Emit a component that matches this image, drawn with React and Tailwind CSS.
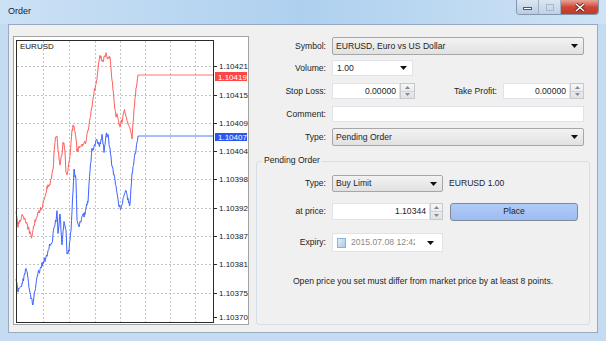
import React from 'react';

// price traces, page coordinates (key points, filled in with a little noise)
const RED_KEYS = [
  [16, 212], [18, 225], [20, 220], [23, 215], [26, 222], [29, 230], [32, 237], [34, 225],
  [37, 215], [40, 210], [43, 205], [45, 195], [48, 185], [50, 183], [53, 170], [55, 140],
  [57, 137], [58, 150], [60, 165], [62, 153], [63, 140], [65, 150], [66, 175], [68, 170],
  [70, 155], [72, 130], [74, 125], [76, 140], [77, 150], [80, 148], [83, 143], [86, 141],
  [88, 130], [90, 120], [92, 105], [94, 92], [96, 85], [98, 70], [100, 55], [102, 62],
  [104, 58], [106, 52], [108, 60], [110, 55], [112, 80], [114, 100], [116, 115], [118, 117],
  [120, 128], [122, 120], [124, 110], [126, 115], [128, 125], [130, 130], [132, 137],
  [134, 110], [136, 90], [138, 75], [213, 75],
];

const BLUE_KEYS = [
  [16, 277], [18, 290], [22, 285], [26, 268], [28, 278], [30, 295], [33, 305], [35, 290],
  [37, 275], [40, 270], [43, 262], [46, 258], [48, 250], [50, 245], [52, 243], [54, 228],
  [56, 220], [57, 210], [58, 235], [60, 212], [62, 245], [64, 220], [66, 230], [67, 255],
  [69, 250], [71, 230], [73, 190], [74, 170], [76, 180], [77, 222], [79, 225], [82, 218],
  [85, 213], [88, 200], [90, 170], [92, 150], [95, 145], [97, 140], [100, 145], [102, 135],
  [104, 150], [106, 135], [108, 135], [110, 150], [112, 165], [115, 180], [117, 195],
  [119, 205], [121, 208], [124, 195], [126, 190], [128, 200], [130, 205], [132, 175],
  [134, 160], [136, 150], [138, 136], [213, 136],
];

const GRID_X = [29, 55, 81, 106, 131, 156, 181];
const GRID_Y = [29, 58, 86, 114, 142, 171, 199, 227, 256];
const PRICES = [
  ['1.10421', 29], ['1.10415', 58], ['1.10409', 86], ['1.10404', 114], ['1.10398', 142],
  ['1.10392', 171], ['1.10387', 199], ['1.10381', 227], ['1.10375', 256], ['1.10370', 280],
];

function jitter(x, seed) {
  const v = Math.sin(x * 12.9898 + seed * 78.233) * 43758.5453;
  return v - Math.floor(v) - 0.5;
}

function trace(keys, seed) {
  const pts = [];
  for (let i = 0; i < keys.length - 1; i++) {
    const [x0, y0] = keys[i];
    const [x1, y1] = keys[i + 1];
    const n = Math.max(1, Math.round((x1 - x0) * 2));
    for (let s = 0; s < n; s++) {
      const x = x0 + ((x1 - x0) * s) / n;
      let y = y0 + ((y1 - y0) * s) / n;
      if (x1 - x0 < 20) y += jitter(x, seed) * 5;
      pts.push([x, y]);
    }
  }
  pts.push(keys[keys.length - 1]);
  return pts.map(([x, y]) => `${(x - 14).toFixed(1)},${(y - 37).toFixed(1)}`).join(' ');
}

const Chart = () => (
  <svg width="234" height="287" className="block" fontFamily="Liberation Sans, Arial, sans-serif">
    <rect width="234" height="287" fill="#fff" />
    {GRID_X.map((x) => (
      <line key={x} x1={x + 0.5} y1="4" x2={x + 0.5} y2="285" stroke="#c4c4c4" strokeDasharray="2 2" />
    ))}
    {GRID_Y.map((y) => (
      <line key={y} x1="3" y1={y + 0.5} x2="199" y2={y + 0.5} stroke="#c4c4c4" strokeDasharray="2 2" />
    ))}
    <polyline points={trace(RED_KEYS, 1)} fill="none" stroke="#ff5c5c" strokeWidth="1" />
    <polyline points={trace(BLUE_KEYS, 2)} fill="none" stroke="#3b62ff" strokeWidth="1" />
    <rect x="2.5" y="3.5" width="197" height="282" fill="none" stroke="#2b2b2b" />
    {PRICES.map(([p, y]) => (
      <g key={p}>
        <line x1="199" y1={y + 0.5} x2="203" y2={y + 0.5} stroke="#2b2b2b" />
        <text x="205" y={y + 3} fontSize="8" fill="#222">{p}</text>
      </g>
    ))}
    <rect x="201" y="35" width="32" height="9" fill="#ff4646" />
    <text x="204" y="42.5" fontSize="8" fill="#fff">1.10419</text>
    <rect x="201" y="96" width="32" height="8" fill="#2c56f2" />
    <text x="204" y="103" fontSize="8" fill="#fff">1.10407</text>
    <text x="6" y="12" fontSize="8" fill="#111">EURUSD</text>
  </svg>
);

const Arrow = () => (
  <svg width="7" height="4" className="shrink-0">
    <path d="M0 0H7L3.5 4Z" fill="#111" />
  </svg>
);

const Spin = ({ w }) => (
  <div className={`${w} h-full shrink-0 flex flex-col border border-[#c6c9cf] bg-gradient-to-b from-[#f6f6f6] to-[#e2e2e2]`}>
    <div className="flex-1 flex items-center justify-center border-b border-[#cfd2d7]">
      <svg width="5" height="3"><path d="M0 3L2.5 0L5 3Z" fill="#7d8aa0" /></svg>
    </div>
    <div className="flex-1 flex items-center justify-center">
      <svg width="5" height="3"><path d="M0 0L2.5 3L5 0Z" fill="#7d8aa0" /></svg>
    </div>
  </div>
);

const Combo = ({ w, h, children }) => (
  <div className={`${w} ${h} shrink-0 flex items-center justify-between pl-[3px] pr-[5px] rounded-[2px] border border-[#a7a7a7] bg-gradient-to-b from-[#f3f3f3] to-[#e1e1e1]`}>
    <span>{children}</span>
    <Arrow />
  </div>
);

const Label = ({ w, children }) => (
  <div className={`${w} shrink-0 text-right pr-[6px]`}>{children}</div>
);

const Field = ({ w, children }) => (
  <div className={`${w} h-full flex items-center justify-end pr-[3px] bg-white border border-[#e0e2e8]`}>{children}</div>
);

export default function App() {
  return (
    <div className="w-[606px] h-[341px] flex flex-col overflow-hidden bg-[#c4dbf1] text-[8.6px] leading-[11px] text-[#1e1e1e] font-['Liberation_Sans',Arial,sans-serif]">
      {/* title bar */}
      <div className="h-[24px] shrink-0 flex items-start justify-between pl-[8px] pr-[7px] bg-gradient-to-r from-[#cbe1f5] via-[#aed0ef] to-[#cfe3f5]">
        <span className="mt-[6px] text-[9px] text-[#15253a]">Order</span>
        <div className="flex h-[15px] rounded-b-[4px] border border-t-0 border-[#8396ae] overflow-hidden">
          <div className="w-[22px] flex items-end justify-center pb-[4px] bg-gradient-to-b from-[#dbe6f1] to-[#b9cde2] border-r border-[#9fb0c4]">
            <div className="w-[9px] h-[3px] bg-white border border-[#4a5b70]" />
          </div>
          <div className="w-[22px] flex items-center justify-center bg-gradient-to-b from-[#dbe6f1] to-[#bfd1e4] border-r border-[#9fb0c4]">
            <div className="w-[8px] h-[7px] border border-[#a9b9cb]" />
          </div>
          <div className="w-[37px] flex items-center justify-center bg-gradient-to-b from-[#e8a49a] via-[#cf4635] to-[#c23a2b]">
            <svg width="10" height="9">
              <path d="M1 1L9 8M9 1L1 8" stroke="#5a1a12" strokeWidth="3" />
              <path d="M1 1L9 8M9 1L1 8" stroke="#fff" strokeWidth="1.6" />
            </svg>
          </div>
        </div>
      </div>

      {/* client area */}
      <div className="flex-1 mx-[8px] mb-[8px] flex border border-[#97abc0] bg-[#f0f0f0]">
        <div className="ml-[4px] mt-[11px] w-[236px] h-[289px] shrink-0 border border-[#a3a3a3]">
          <Chart />
        </div>

        <div className="ml-[7px] mt-[12px] w-[334px] flex flex-col">
          <div className="h-[18px] flex items-center">
            <Label w="w-[76px]">Symbol:</Label>
            <Combo w="w-[252px]" h="h-full">EURUSD, Euro vs US Dollar</Combo>
          </div>
          <div className="mt-[5px] h-[16px] flex items-center">
            <Label w="w-[76px]">Volume:</Label>
            <div className="w-[81px] h-full flex items-center justify-between pl-[4px] pr-[5px] bg-white border border-[#e0e2e8]">
              <span>1.00</span>
              <Arrow />
            </div>
          </div>
          <div className="mt-[7px] h-[16px] flex items-center">
            <Label w="w-[76px]">Stop Loss:</Label>
            <Field w="w-[68px]">0.00000</Field>
            <Spin w="w-[15px]" />
            <Label w="w-[88px]">Take Profit:</Label>
            <Field w="w-[67px]">0.00000</Field>
            <Spin w="w-[14px]" />
          </div>
          <div className="mt-[7px] h-[16px] flex items-center">
            <Label w="w-[76px]">Comment:</Label>
            <div className="w-[252px] h-full bg-white border border-[#e0e2e8]" />
          </div>
          <div className="mt-[6px] h-[18px] flex items-center">
            <Label w="w-[76px]">Type:</Label>
            <Combo w="w-[252px]" h="h-full">Pending Order</Combo>
          </div>

          {/* Pending Order group */}
          <div className="relative mt-[15px] h-[164px] flex flex-col rounded-[3px] border border-[#d5dfe5]">
            <span className="absolute left-[5px] top-[-7px] px-[2px] bg-[#f0f0f0]">Pending Order</span>
            <div className="mt-[13px] h-[17px] flex items-center">
              <Label w="w-[75px]">Type:</Label>
              <Combo w="w-[111px]" h="h-full">Buy Limit</Combo>
              <span className="ml-[6px]">EURUSD 1.00</span>
            </div>
            <div className="mt-[11px] h-[17px] flex items-center">
              <Label w="w-[75px]">at price:</Label>
              <Field w="w-[98px]">1.10344</Field>
              <Spin w="w-[13px]" />
              <div className="ml-[7px] w-[128px] h-[18px] flex items-center justify-center rounded-[3px] border border-[#7f8a99] bg-gradient-to-b from-[#b1cbf6] to-[#9dbcf2]">
                Place
              </div>
            </div>
            <div className="mt-[13px] h-[19px] flex items-center">
              <Label w="w-[75px]">Expiry:</Label>
              <div className="w-[111px] h-full flex items-center pl-[4px] pr-[8px] bg-white border border-[#e0e2e8]">
                <div className="w-[9px] h-[10px] shrink-0 border border-[#8eb2d3] bg-gradient-to-br from-[#e2eefa] to-[#a8cbe9]" />
                <span className="ml-[5px] w-[64px] overflow-hidden whitespace-nowrap text-[#8a8a8a]">2015.07.08 12:42</span>
                <span className="flex-1" />
                <Arrow />
              </div>
            </div>
            <div className="mt-[24px] text-center">
              Open price you set must differ from market price by at least 8 points.
            </div>
          </div>
        </div>
      </div>
    </div>
  );
}
